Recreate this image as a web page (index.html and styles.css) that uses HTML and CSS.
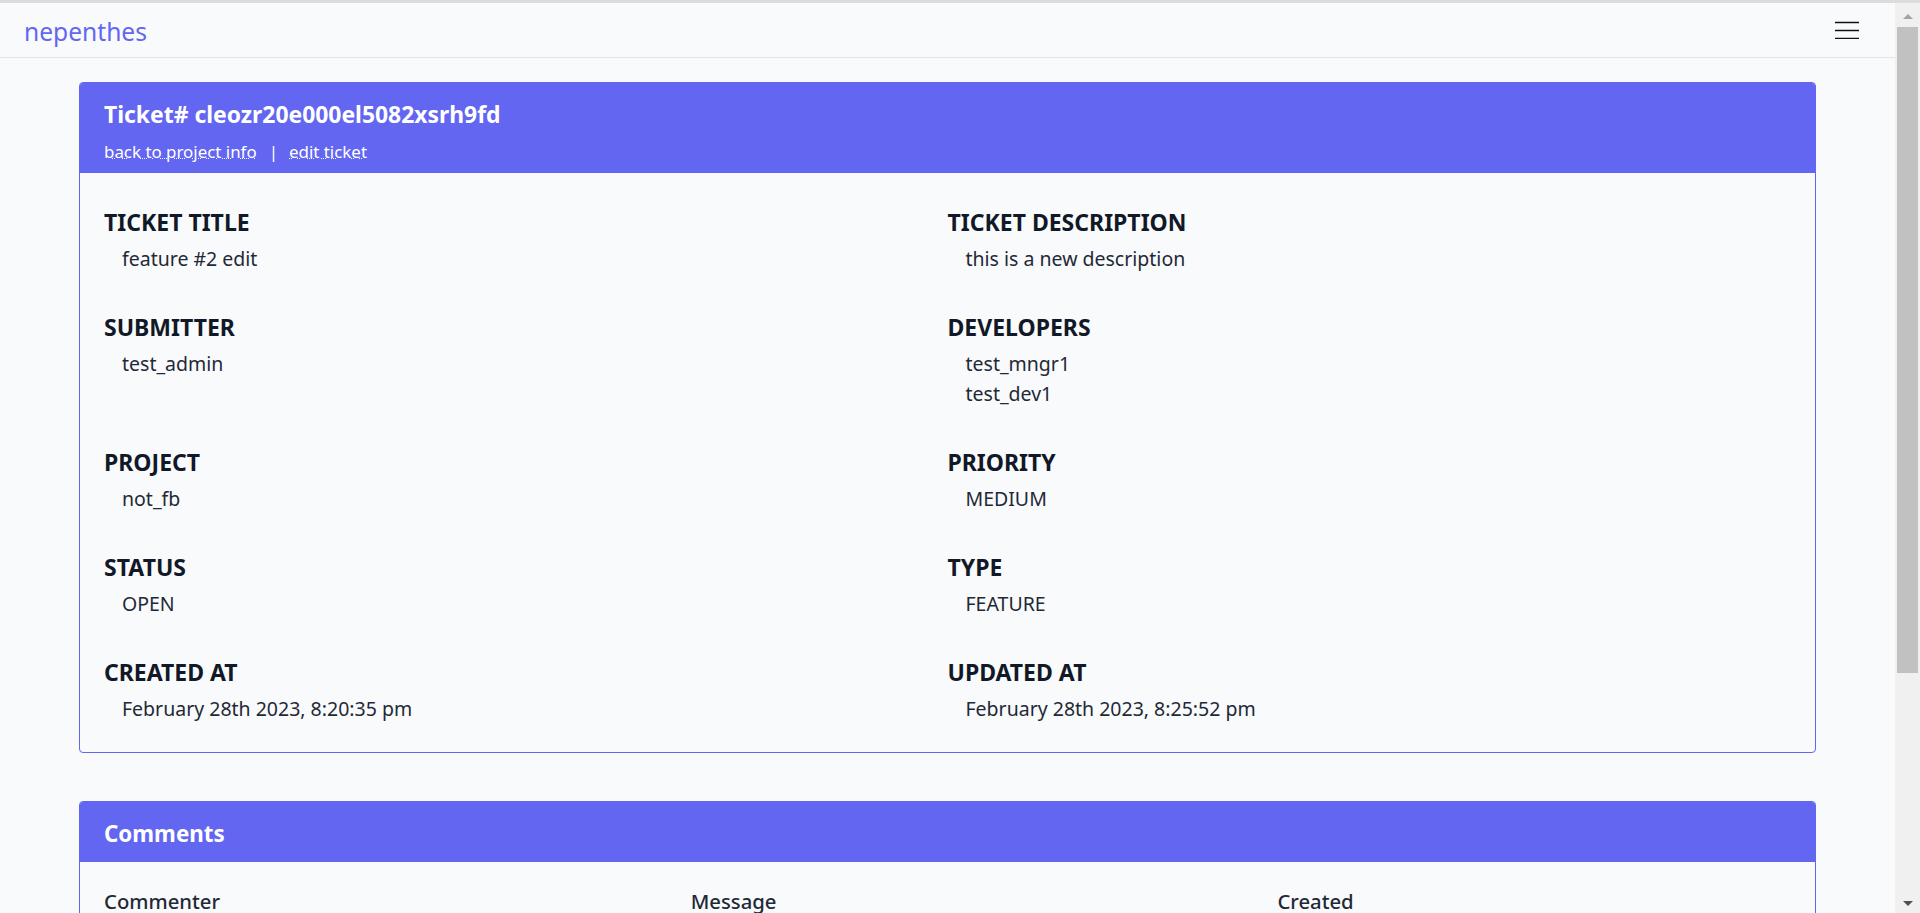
FILE: index.html
```html
<!DOCTYPE html>
<html lang="en">
<head>
<meta charset="utf-8">
<title>nepenthes</title>
<link rel="stylesheet" href="styles.css">
</head>
<body>
<div class="topline"></div>
<div class="window">
  <div class="page">
    <nav class="navbar">
      <a class="brand" href="#">nepenthes</a>
      <button class="menu-btn" aria-label="menu">
        <svg width="24" height="18" viewBox="0 0 24 18"><path d="M0 1.5h24M0 9.5h24M0 17.5h24" stroke="#111" stroke-width="1.3" fill="none"/></svg>
      </button>
    </nav>
    <main class="main">
      <section class="card">
        <header class="card-head">
          <h1 class="card-title">Ticket# cleozr20e000el5082xsrh9fd</h1>
          <div class="head-links">
            <a href="#">back to project info</a><span class="sep">|</span><a href="#">edit ticket</a>
          </div>
        </header>
        <div class="card-body fields">
          <div class="field">
            <h2 class="label">TICKET TITLE</h2>
            <p class="value">feature #2 edit</p>
          </div>
          <div class="field">
            <h2 class="label">TICKET DESCRIPTION</h2>
            <p class="value">this is a new description</p>
          </div>
          <div class="field">
            <h2 class="label">SUBMITTER</h2>
            <p class="value">test_admin</p>
          </div>
          <div class="field">
            <h2 class="label">DEVELOPERS</h2>
            <p class="value">test_mngr1</p>
            <p class="value">test_dev1</p>
          </div>
          <div class="field">
            <h2 class="label">PROJECT</h2>
            <p class="value">not_fb</p>
          </div>
          <div class="field">
            <h2 class="label">PRIORITY</h2>
            <p class="value">MEDIUM</p>
          </div>
          <div class="field">
            <h2 class="label">STATUS</h2>
            <p class="value">OPEN</p>
          </div>
          <div class="field">
            <h2 class="label">TYPE</h2>
            <p class="value">FEATURE</p>
          </div>
          <div class="field">
            <h2 class="label">CREATED AT</h2>
            <p class="value">February 28th 2023, 8:20:35 pm</p>
          </div>
          <div class="field">
            <h2 class="label">UPDATED AT</h2>
            <p class="value">February 28th 2023, 8:25:52 pm</p>
          </div>
        </div>
      </section>

      <section class="card comments">
        <header class="card-head comments-head">
          <h1 class="card-title comments-title">Comments</h1>
        </header>
        <div class="card-body comments-body">
          <div class="table-row table-head">
            <div class="cell">Commenter</div>
            <div class="cell">Message</div>
            <div class="cell">Created</div>
          </div>
        </div>
      </section>
    </main>
  </div>
  <div class="scrollbar" aria-hidden="true">
    <div class="sb-btn sb-up"><span class="arrow-up"></span></div>
    <div class="sb-track"><div class="sb-thumb"></div></div>
    <div class="sb-btn sb-down"><span class="arrow-down"></span></div>
  </div>
</div>
</body>
</html>
```
FILE: styles.css
```css
* { box-sizing: border-box; }

html, body {
  margin: 0;
  padding: 0;
  height: 913px;
  overflow: hidden;
}

body {
  font-family: "Noto Sans", "Open Sans", sans-serif;
  background: #f9fafb;
  color: #111827;
}

.topline {
  height: 3px;
  background: #dcdcdc;
}

.window {
  display: flex;
  height: 910px;
}

.page {
  flex: 1;
  min-width: 0;
  overflow: hidden;
  background: #f9fafb;
}

/* navbar */
.navbar {
  display: flex;
  align-items: center;
  justify-content: space-between;
  height: 55px;
  padding: 0 36px 0 24px;
  border-bottom: 1px solid #e4e4e7;
}

.brand {
  font-size: 24.6px;
  line-height: 50px;
  padding-top: 4px;
  height: 54px;
  color: #6366f1;
  text-decoration: none;
}

.menu-btn {
  display: flex;
  background: none;
  border: 0;
  padding: 0;
  margin: 0;
  cursor: pointer;
}

.menu-btn svg { display: block; }

/* main */
.main {
  padding: 24px 79px 0;
  display: flex;
  flex-direction: column;
  gap: 48px;
}

.card {
  border: 1px solid #6366f1;
  border-radius: 4px;
  overflow: hidden;
  background: #f9fafb;
}

.card-head {
  background: #6366f1;
  color: #fff;
  padding: 16px 24px 9px;
}

.card-title {
  margin: 0 0 9px;
  font-size: 22.9px;
  line-height: 31px;
  font-weight: 700;
}

.head-links {
  font-size: 16.9px;
  line-height: 25px;
  display: flex;
  align-items: center;
}

.head-links a {
  color: #fff;
  text-decoration: underline dotted;
  text-underline-offset: 0px;
  text-decoration-thickness: 1px;
}

.sep {
  margin: 0 11px 0 12px;
  font-size: 17px;
}

.card-body {
  padding: 31.5px 24px 28.5px;
}

.fields {
  display: grid;
  grid-template-columns: 1fr 1fr;
  row-gap: 36px;
}

.label {
  margin: 0 0 4px;
  font-size: 23px;
  line-height: 35px;
  font-weight: 700;
  color: #111827;
}

.value {
  margin: 0;
  padding-left: 18px;
  font-size: 19.5px;
  line-height: 30px;
  color: #1f2937;
}

/* comments */
.comments-head {
  padding: 16px 24px 13px;
}

.comments-title {
  margin: 0;
  font-size: 22.35px;
}

.comments-body {
  padding: 24px 0 300px;
}

.table-row {
  display: grid;
  grid-template-columns: 586.7px 586.7px 1fr;
}

.cell {
  padding: 0 24px;
  font-size: 20.3px;
  line-height: 30px;
  font-weight: 500;
  color: #1f2937;
}

/* fake window scrollbar */
.scrollbar {
  width: 25px;
  flex: none;
  background: #f0f0f0;
  display: flex;
  flex-direction: column;
}

.sb-btn {
  height: 24px;
  display: flex;
  justify-content: center;
  padding-left: 1px;
}

.sb-up { align-items: flex-start; padding-top: 11px; }
.sb-down { align-items: flex-start; padding-top: 12px; }

.arrow-up {
  width: 0;
  height: 0;
  border-left: 5.5px solid transparent;
  border-right: 5.5px solid transparent;
  border-bottom: 5.5px solid #a3a3a3;
}

.arrow-down {
  width: 0;
  height: 0;
  border-left: 5.5px solid transparent;
  border-right: 5.5px solid transparent;
  border-top: 5.5px solid #505050;
}

.sb-track {
  flex: 1;
  padding: 0 2px;
}

.sb-thumb {
  height: 646px;
  background: #c1c1c1;
}
```
